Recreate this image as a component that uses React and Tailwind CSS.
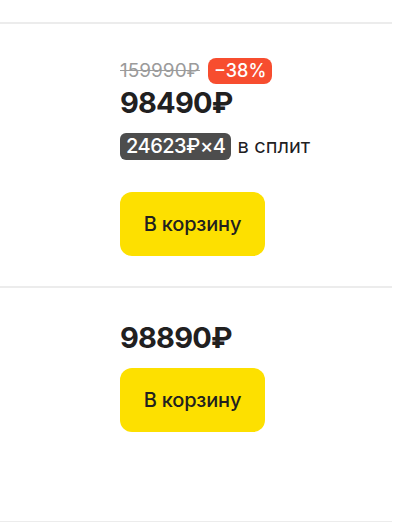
import React from 'react';

const font = { fontFamily: 'Inter, "Noto Sans", sans-serif' };

function CartButton() {
  return (
    <button className="w-[145px] h-[64px] rounded-[12px] bg-[#fde000] text-[#21201f] text-[20px] font-medium tracking-[-0.2px]">
      В корзину
    </button>
  );
}

export default function App() {
  return (
    <div className="w-[406px] h-[528px] bg-white text-[#21201f]" style={font}>
      <div className="w-[392px]">
        <div className="h-[24px] border-b-2 border-[#ececec]" />

        <div className="pl-[120px] pt-[34px] pb-[30px] border-b-2 border-[#ececec]">
          <div className="flex items-center gap-[8px] h-[26px]">
            <span className="text-[19px] leading-[26px] text-[#9b9b9b] line-through">159990₽</span>
            <span className="h-[26px] px-[6px] rounded-[8px] bg-[#f74d2f] text-white text-[18px] leading-[26px] font-medium">
              −38%
            </span>
          </div>
          <div className="mt-[2px] text-[29px] leading-[34px] font-bold tracking-[-0.8px]">98490₽</div>
          <div className="mt-[13px] flex items-center gap-[6px] h-[27px]">
            <span className="h-[27px] px-[6px] rounded-[6px] bg-[#4d4d4d] text-white text-[20px] leading-[27px] font-medium tracking-[-0.5px]">
              24623₽×4
            </span>
            <span className="text-[20px] leading-[27px]">в сплит</span>
          </div>
          <div className="mt-[32px]">
            <CartButton />
          </div>
        </div>

        <div className="pl-[120px] pt-[33px] h-[234px] border-b border-[#ececec]">
          <div className="text-[29px] leading-[34px] font-bold tracking-[-0.8px]">98890₽</div>
          <div className="mt-[13px]">
            <CartButton />
          </div>
        </div>
      </div>
    </div>
  );
}
